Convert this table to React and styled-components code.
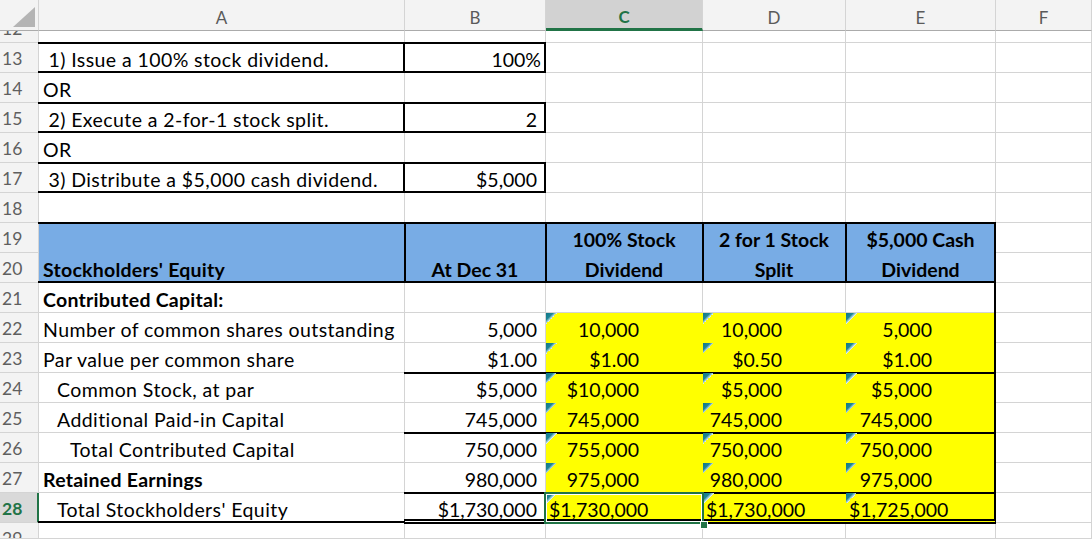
import React from 'react';
import styled, { createGlobalStyle } from 'styled-components';

const GRID = '#d4d4d4';
const GREEN = '#217346';
const BLUE = '#78ace5';
const YELLOW = '#ffff00';
const FONT = 'Lato, "Open Sans", "Liberation Sans", sans-serif';

const GlobalStyle = createGlobalStyle`
  html, body { margin: 0; padding: 0; background: #fff; overflow: hidden; }
  body { font-family: ${FONT}; }
`;

const Sheet = styled.div`
  display: grid;
  grid-template-columns: 39px 366px 141px 157px 143px 150px 1fr;
  grid-template-rows: 31px 12px repeat(16, 30px) 16px;
  width: 1092px;
  height: 539px;
  overflow: hidden;
  font-family: ${FONT};
  color: #000;
`;

const Corner = styled.div`
  position: relative;
  background: #f3f3f3;
  border-right: 1px solid ${GRID};
  border-bottom: 1px solid #ababab;
  display: flex;
  align-items: flex-end;
  justify-content: flex-end;
  padding: 0 3px 3px 0;
`;

const ColHeader = styled.div`
  display: flex;
  align-items: center;
  justify-content: center;
  padding-top: 4px;
  background: ${(p) => (p.$selected ? '#d2d2d2' : '#f3f3f3')};
  color: ${(p) => (p.$selected ? GREEN : '#5a5a5a')};
  font-weight: ${(p) => (p.$selected ? 700 : 400)};
  font-size: 17px;
  border-right: 1px solid ${GRID};
  border-bottom: ${(p) => (p.$selected ? `3px solid ${GREEN}` : '1px solid #ababab')};
`;

const RowHeader = styled.div`
  overflow: hidden;
  background: ${(p) => (p.$selected ? '#d9d9d9' : '#f3f3f3')};
  color: ${(p) => (p.$selected ? GREEN : '#5f5f5f')};
  font-weight: ${(p) => (p.$selected ? 700 : 400)};
  font-size: 17.5px;
  line-height: 31px;
  padding-left: 2px;
  border-bottom: 1px solid ${GRID};
  border-right: ${(p) => (p.$selected ? `2px solid ${GREEN}` : `1px solid ${GRID}`)};
`;

const RowLabel = styled.span`
  display: block;
  height: 30px;
  margin-top: ${(p) => (p.$clipTop ? '-18px' : '0')};
`;

const thick = (on) => (on ? '2px solid #000' : '0 solid transparent');

const Cell = styled.div`
  position: relative;
  min-width: 0;
  grid-row: span ${(p) => p.$rows || 1};
  background: ${(p) => p.$fill || '#fff'};
  border-right: 1px solid ${(p) => p.$fill || GRID};
  border-bottom: 1px solid ${(p) => p.$fill || GRID};
  display: flex;
  flex-direction: column;
  justify-content: flex-end;
  align-items: stretch;
  padding: 0 ${(p) => p.$pr ?? 4}px 0 ${(p) => p.$pl ?? 4}px;
  font-size: 19.5px;
  line-height: 25px;
  letter-spacing: ${(p) => (p.$label ? (p.$bold ? '0.25px' : '0.42px') : '0')};
  text-align: ${(p) => p.$align || 'left'};
  font-weight: ${(p) => (p.$bold ? 700 : 400)};
  white-space: pre;
  &::after {
    content: '';
    position: absolute;
    left: -1px;
    right: -1px;
    top: -1px;
    bottom: ${(p) => (p.$bb === 'double' ? '-2px' : '-1px')};
    pointer-events: none;
    z-index: 2;
    border-top: ${(p) => thick(p.$bt)};
    border-left: ${(p) => thick(p.$bl)};
    border-right: ${(p) => thick(p.$br)};
    border-bottom: ${(p) =>
      p.$bb === 'double' ? '5px double #000' : thick(p.$bb)};
  }
`;

const Line = styled.span`
  display: block;
  line-height: 25px;
  margin-top: 5px;
`;

const ErrorMark = styled.span`
  position: absolute;
  left: 0;
  top: 0;
  width: 11px;
  height: 11px;
  z-index: 3;
  background: linear-gradient(135deg, #0f7888 0%, #1f8696 32%, #d8ecef 50%, transparent 50%);
`;

const SelectionBox = styled.span`
  position: absolute;
  left: -2px;
  top: -1px;
  right: -2px;
  bottom: -2px;
  border: 2px solid ${GREEN};
  box-shadow: inset 0 0 0 1px #fff;
  z-index: 4;
  pointer-events: none;
`;

const FillHandle = styled.span`
  position: absolute;
  right: -6px;
  bottom: -7px;
  width: 8px;
  height: 8px;
  box-sizing: border-box;
  background: ${GREEN};
  border: 1px solid #fff;
  z-index: 5;
`;

const CornerTriangle = () => (
  <svg width="22" height="20" viewBox="0 0 22 20">
    <polygon points="22,0 22,20 0,20" fill="#b4b4b4" />
  </svg>
);

const Y = ({ children, left, bt, bb, br, selected }) => (
  <Cell
    $fill={YELLOW}
    $align={left ? 'left' : 'right'}
    $pr={left ? 2 : 63}
    $pl={left ? 3 : 4}
    $bt={bt}
    $bb={bb}
    $br={br}
  >
    <ErrorMark />
    {children}
    {selected && (
      <SelectionBox>
        <FillHandle />
      </SelectionBox>
    )}
  </Cell>
);

const cols = ['A', 'B', 'C', 'D', 'E', 'F'];

const dataRows = [
  { a: 'Number of common shares outstanding', b: '5,000', c: '10,000', d: '10,000', e: '5,000' },
  { a: 'Par value per common share', b: '$1.00', c: '$1.00', d: '$0.50', e: '$1.00' },
  { a: 'Common Stock, at par', indent: 1, b: '$5,000', c: '$10,000', d: '$5,000', e: '$5,000', top: true },
  { a: 'Additional Paid-in Capital', indent: 1, b: '745,000', c: '745,000', d: '745,000', e: '745,000' },
  { a: 'Total Contributed Capital', indent: 2, b: '750,000', c: '755,000', d: '750,000', e: '750,000', top: true },
  { a: 'Retained Earnings', bold: true, b: '980,000', c: '975,000', d: '980,000', e: '975,000' },
];

const indentPad = [4, 18, 31];

export default function App() {
  return (
    <>
      <GlobalStyle />
      <Sheet>
        <Corner>
          <CornerTriangle />
        </Corner>
        {cols.map((c) => (
          <ColHeader key={c} $selected={c === 'C'}>
            {c}
          </ColHeader>
        ))}

        {/* row 12 (partial) */}
        <RowHeader>
          <RowLabel $clipTop>12</RowLabel>
        </RowHeader>
        {cols.map((c) => (
          <Cell key={'12' + c} />
        ))}

        {/* rows 13 - 18 */}
        {[
          { n: 13, a: ' 1) Issue a 100% stock dividend.', b: '100%', box: true, pr: 4 },
          { n: 14, a: 'OR' },
          { n: 15, a: ' 2) Execute a 2-for-1 stock split.', b: '2', box: true, pr: 8 },
          { n: 16, a: 'OR' },
          { n: 17, a: ' 3) Distribute a $5,000 cash dividend.', b: '$5,000', box: true, pr: 8 },
          { n: 18, a: '' },
        ].map((r) => (
          <React.Fragment key={r.n}>
            <RowHeader>
              <RowLabel>{r.n}</RowLabel>
            </RowHeader>
            <Cell $label $bt={r.box} $bb={r.box} $br={r.box}>
              {r.a}
            </Cell>
            <Cell $align="right" $pr={r.pr} $bt={r.box} $bb={r.box} $br={r.box}>
              {r.b || ''}
            </Cell>
            <Cell />
            <Cell />
            <Cell />
            <Cell />
          </React.Fragment>
        ))}

        {/* rows 19 - 20 header block */}
        <RowHeader>
          <RowLabel>19</RowLabel>
        </RowHeader>
        <Cell $rows={2} $fill={BLUE} $label $bold $bt $bb>
          Stockholders' Equity
        </Cell>
        <Cell $rows={2} $fill={BLUE} $bold $align="center" $bt $bb $bl>
          At Dec 31
        </Cell>
        <Cell $rows={2} $fill={BLUE} $bold $align="center" $bt $bb $bl>
          <Line>100% Stock</Line>
          <Line>Dividend</Line>
        </Cell>
        <Cell $rows={2} $fill={BLUE} $bold $align="center" $bt $bb $bl>
          <Line>2 for 1 Stock</Line>
          <Line>Split</Line>
        </Cell>
        <Cell $rows={2} $fill={BLUE} $bold $align="center" $bt $bb $bl $br>
          <Line>$5,000 Cash</Line>
          <Line>Dividend</Line>
        </Cell>
        <Cell />
        <RowHeader>
          <RowLabel>20</RowLabel>
        </RowHeader>
        <Cell />

        {/* row 21 */}
        <RowHeader>
          <RowLabel>21</RowLabel>
        </RowHeader>
        <Cell $label $bold>Contributed Capital:</Cell>
        <Cell />
        <Cell />
        <Cell />
        <Cell $br />
        <Cell />

        {/* rows 22 - 27 */}
        {dataRows.map((r, i) => (
          <React.Fragment key={i}>
            <RowHeader>
              <RowLabel>{22 + i}</RowLabel>
            </RowHeader>
            <Cell $label $bold={r.bold} $pl={indentPad[r.indent || 0]}>
              {r.a}
            </Cell>
            <Cell $align="right" $pr={8} $bt={r.top}>
              {r.b}
            </Cell>
            <Y bt={r.top}>{r.c}</Y>
            <Y bt={r.top}>{r.d}</Y>
            <Y bt={r.top} br>
              {r.e}
            </Y>
            <Cell />
          </React.Fragment>
        ))}

        {/* row 28 */}
        <RowHeader $selected>
          <RowLabel>28</RowLabel>
        </RowHeader>
        <Cell $label $pl={indentPad[1]} $bb>
          Total Stockholders' Equity
        </Cell>
        <Cell $align="right" $pr={8} $bt $bb="double">
          $1,730,000
        </Cell>
        <Y left bt bb="double" selected>
          $1,730,000
        </Y>
        <Y left bt bb="double">
          $1,730,000
        </Y>
        <Y left bt bb="double" br>
          $1,725,000
        </Y>
        <Cell />

        {/* row 29 (partial) */}
        <RowHeader>
          <RowLabel>29</RowLabel>
        </RowHeader>
        {cols.map((c) => (
          <Cell key={'29' + c} />
        ))}
      </Sheet>
    </>
  );
}
